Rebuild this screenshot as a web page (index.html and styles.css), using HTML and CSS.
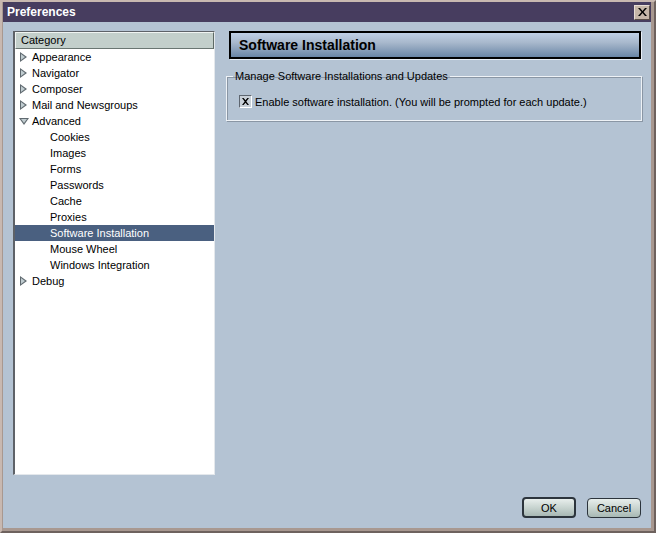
FILE: index.html
```html
<!DOCTYPE html>
<html>
<head>
<meta charset="utf-8">
<link rel="stylesheet" href="styles.css">
</head>
<body>
<div class="window">
  <div class="titlebar">
    <span class="title">Preferences</span>
    <span class="close"><svg width="9" height="8" viewBox="0 0 9 8"><path d="M0 0h2l2.5 3 2.5-3h2l-3.5 4 3.5 4h-2l-2.5-3-2.5 3h-2l3.5-4z" fill="#000"/></svg></span>
  </div>
  <div class="content">
    <div class="main">
      <div class="tree">
        <div class="tree-head">Category</div>
        <div class="row"><span class="twisty closed"></span>Appearance</div>
        <div class="row"><span class="twisty closed"></span>Navigator</div>
        <div class="row"><span class="twisty closed"></span>Composer</div>
        <div class="row"><span class="twisty closed"></span>Mail and Newsgroups</div>
        <div class="row"><span class="twisty open"></span>Advanced</div>
        <div class="row child">Cookies</div>
        <div class="row child">Images</div>
        <div class="row child">Forms</div>
        <div class="row child">Passwords</div>
        <div class="row child">Cache</div>
        <div class="row child">Proxies</div>
        <div class="row child selected">Software Installation</div>
        <div class="row child">Mouse Wheel</div>
        <div class="row child">Windows Integration</div>
        <div class="row"><span class="twisty closed"></span>Debug</div>
      </div>
      <div class="panel">
        <div class="panel-head">Software Installation</div>
        <fieldset class="group">
          <legend>Manage Software Installations and Updates</legend>
          <label class="check"><span class="box"><svg width="7" height="7" viewBox="0 0 7 7"><path d="M0 0h1.6l1.9 2.2 1.9-2.2h1.6l-2.7 3.5 2.7 3.5h-1.6l-1.9-2.2-1.9 2.2h-1.6l2.7-3.5z" fill="#000"/></svg></span>Enable software installation. (You will be prompted for each update.)</label>
        </fieldset>
      </div>
    </div>
    <div class="buttons">
      <button class="btn default">OK</button>
      <button class="btn">Cancel</button>
    </div>
  </div>
</div>
</body>
</html>
```
FILE: styles.css
```css
* { box-sizing: border-box; }
html, body { margin: 0; padding: 0; }
body {
  width: 656px; height: 533px; overflow: hidden;
  font-family: "Liberation Sans", Arial, sans-serif;
  font-size: 11px;
  color: #000;
}
.window {
  width: 656px; height: 533px;
  background: #b4c3d3;
  border-style: solid;
  border-color: #c8b8b0 #6e625e #6e625e #c8b8b0;
  border-width: 2px 2px 2px 2px;
  box-shadow: inset -3px -3px 0 #a89890, inset 1px 0 0 #a89890;
  display: flex; flex-direction: column;
}
.titlebar {
  height: 20px;
  margin: 0 3px 0 1px;
  background: #473d5f;
  display: flex; align-items: center; justify-content: space-between;
  padding: 0 1px 0 4px;
}
.title { color: #fff; font-family: "Liberation Sans", sans-serif; font-weight: bold; font-size: 12px; }
.close {
  width: 16px; height: 15px;
  background: #c6b6a8;
  border: 1px solid; border-color: #e8ddd4 #5a4e48 #5a4e48 #e8ddd4;
  display: flex; align-items: center; justify-content: center;
}
.content { flex: 1; display: flex; flex-direction: column; padding: 9px 12px 8px 11px; }
.main { flex: 1; display: flex; gap: 11px; }
.tree {
  width: 202px; height: 444px;
  background: #fff;
  border-style: solid; border-width: 1px 1px 1px 2px;
  border-color: #5e6268 #e4e8ec #e4e8ec #5e6268;
}
.tree-head {
  height: 17px; background: #c3cfcb;
  border: 1px solid; border-color: #f0f4f2 #5e6a66 #6a7672 #f0f4f2;
  padding-left: 5px; line-height: 15px;
}
.row { height: 16px; line-height: 16px; padding-left: 4px; display: flex; align-items: center; white-space: nowrap; }
.row.child { padding-left: 35px; }
.row.selected { background: #4a6080; color: #fff; }
.twisty { width: 13px; height: 16px; position: relative; flex: none; }
.twisty.closed::before {
  content: ""; position: absolute; left: 1px; top: 3px;
  border-left: 7px solid #606a70; border-top: 5px solid transparent; border-bottom: 5px solid transparent;
}
.twisty.closed::after {
  content: ""; position: absolute; left: 2px; top: 5px;
  border-left: 4px solid #c0ccd0; border-top: 3px solid transparent; border-bottom: 3px solid transparent;
}
.twisty.open::before {
  content: ""; position: absolute; left: 0px; top: 5px;
  border-top: 7px solid #606a70; border-left: 5px solid transparent; border-right: 5px solid transparent;
}
.twisty.open::after {
  content: ""; position: absolute; left: 2px; top: 6px;
  border-top: 4px solid #c0ccd0; border-left: 3px solid transparent; border-right: 3px solid transparent;
}
.panel { flex: 1; display: flex; flex-direction: column; }
.panel-head {
  height: 28px; margin: 0 1px 0 3px;
  background: linear-gradient(#c0d0e6, #a8b8cc 40%, #6a86a6);
  border: 2px solid #000;
  box-shadow: 1px 1px 0 #e8eef6;
  font-family: "Liberation Sans", sans-serif; font-weight: bold; font-size: 14px;
  padding-left: 8px; line-height: 24px;
}
.group {
  margin: 11px 0 0 0; padding: 13px 10px 12px 12px;
  border: 1px solid; border-color: #eef2f6;
  box-shadow: inset 1px 1px 0 #8a96a4, 1px 1px 0 #8a96a4;
  min-width: 0;
}
.group legend { padding: 0 2px; margin-left: -6px; }
.check { display: flex; align-items: center; gap: 3px; }
.box {
  width: 13px; height: 13px; background: #c8d0d8;
  border: 1px solid; border-color: #5e6670 #fff #fff #5e6670;
  display: flex; align-items: center; justify-content: center;
}
.buttons { display: flex; justify-content: flex-end; gap: 11px; padding-top: 11px; height: 36px; align-items: flex-start; padding-right: 1px; }
.btn {
  font-family: "Liberation Sans", sans-serif; font-size: 11px;
  width: 54px; height: 20px; border-radius: 4px;
  background: linear-gradient(#e8eeec, #c8d4d0 50%, #a8b8b4);
  border: 1px solid #2c343c; padding: 0;
}
.btn.default { border: 2px solid #2c343c; height: 21px; margin-top: -1px; }
```
